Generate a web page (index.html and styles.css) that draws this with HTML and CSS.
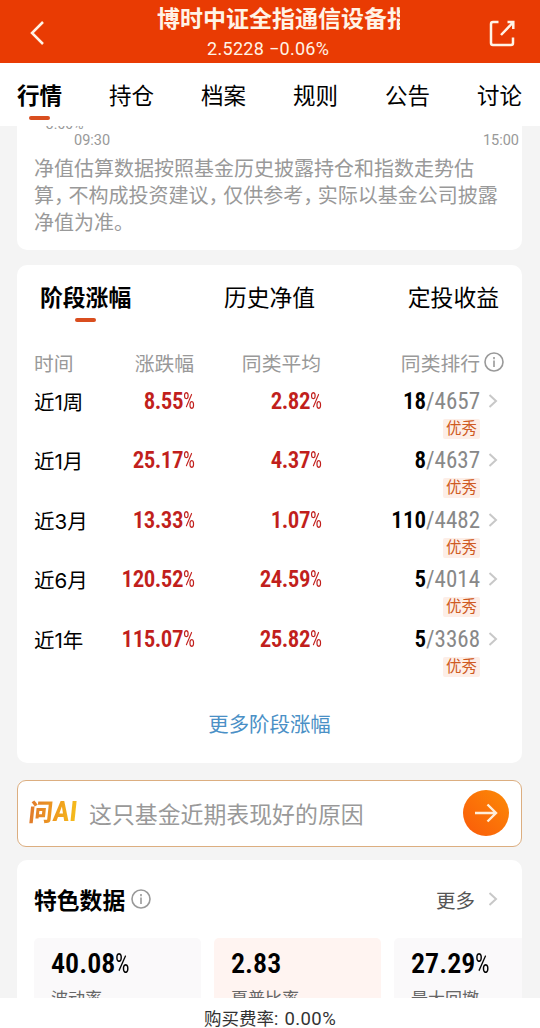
FILE: index.html
```html
<!DOCTYPE html>
<html lang="zh-CN">
<head>
    <meta charset="UTF-8">
    <meta name="viewport" content="width=device-width, initial-scale=1.0">
    <title>基金详情</title>
    <link rel="stylesheet" href="styles.css">
</head>
<body>
    <!-- 顶部标题栏 -->
    <header class="top-bar">
        <svg class="back" width="16" height="26" viewBox="0 0 16 26"><path d="M14 2 L3 13 L14 24"/></svg>
        <div class="fund">
            <h1>博时中证全指通信设备指数</h1>
            <p>2.5228 −0.06%</p>
        </div>
        <svg class="share" width="26" height="27" viewBox="0 0 26 27"><path d="M9.5 2 H4 Q2 2 2 4 V23 Q2 25 4 25 H22 Q24 25 24 23 V17.5 M12 15 L24 2.5 M18.5 2 H24.3 V9"/></svg>
    </header>

    <!-- 导航 -->
    <nav class="tabs">
        <a class="active">行情</a>
        <a>持仓</a>
        <a>档案</a>
        <a>规则</a>
        <a>公告</a>
        <a>讨论</a>
    </nav>

    <main>
        <!-- 净值估算 -->
        <section class="card estimate">
            <div class="axis-y">-3.00%</div>
            <div class="axis-x"><span>09:30</span><span>15:00</span></div>
            <p class="note">净值估算数据按照基金历史披露持仓和指数走势估<br>算<s>，</s>不构成投资建议<s>，</s>仅供参考<s>，</s>实际以基金公司披露<br>净值为准。</p>
        </section>

        <!-- 阶段涨幅 -->
        <section class="card stage">
            <div class="sub-tabs">
                <a class="active">阶段涨幅</a>
                <a>历史净值</a>
                <a>定投收益</a>
            </div>
            <div class="row head">
                <span>时间</span>
                <span>涨跌幅</span>
                <span>同类平均</span>
                <span>同类排行</span>
                <svg class="info" width="20" height="20" viewBox="0 0 20 20"><circle cx="10" cy="10" r="9"/><path d="M10 8.5 V15 M10 5 V7.2"/></svg>
            </div>
            <div class="row">
                <span class="period">近1周</span>
                <span class="rate">8.55<i>%</i></span>
                <span class="rate">2.82<i>%</i></span>
                <span class="rank"><b>18</b>/4657</span>
                <svg class="chevron" width="10" height="14" viewBox="0 0 10 14"><path d="M1.5 1 L8 7 L1.5 13"/></svg>
                <em class="badge">优秀</em>
            </div>
            <div class="row">
                <span class="period">近1月</span>
                <span class="rate">25.17<i>%</i></span>
                <span class="rate">4.37<i>%</i></span>
                <span class="rank"><b>8</b>/4637</span>
                <svg class="chevron" width="10" height="14" viewBox="0 0 10 14"><path d="M1.5 1 L8 7 L1.5 13"/></svg>
                <em class="badge">优秀</em>
            </div>
            <div class="row">
                <span class="period">近3月</span>
                <span class="rate">13.33<i>%</i></span>
                <span class="rate">1.07<i>%</i></span>
                <span class="rank"><b>110</b>/4482</span>
                <svg class="chevron" width="10" height="14" viewBox="0 0 10 14"><path d="M1.5 1 L8 7 L1.5 13"/></svg>
                <em class="badge">优秀</em>
            </div>
            <div class="row">
                <span class="period">近6月</span>
                <span class="rate">120.52<i>%</i></span>
                <span class="rate">24.59<i>%</i></span>
                <span class="rank"><b>5</b>/4014</span>
                <svg class="chevron" width="10" height="14" viewBox="0 0 10 14"><path d="M1.5 1 L8 7 L1.5 13"/></svg>
                <em class="badge">优秀</em>
            </div>
            <div class="row">
                <span class="period">近1年</span>
                <span class="rate">115.07<i>%</i></span>
                <span class="rate">25.82<i>%</i></span>
                <span class="rank"><b>5</b>/3368</span>
                <svg class="chevron" width="10" height="14" viewBox="0 0 10 14"><path d="M1.5 1 L8 7 L1.5 13"/></svg>
                <em class="badge">优秀</em>
            </div>
            <a class="more-link">更多阶段涨幅</a>
        </section>

        <!-- 问AI -->
        <section class="ask">
            <span class="ask-logo">问<b>AI</b></span>
            <span class="ask-text">这只基金近期表现好的原因</span>
            <button class="ask-go">
                <svg width="24" height="20" viewBox="0 0 24 20"><path d="M1 10 H22 M13.5 1.5 L22 10 L13.5 18.5"/></svg>
            </button>
        </section>

        <!-- 特色数据 -->
        <section class="card feature">
            <div class="feature-head">
                <h2>特色数据</h2>
                <svg class="info" width="20" height="20" viewBox="0 0 20 20"><circle cx="10" cy="10" r="9"/><path d="M10 8.5 V15 M10 5 V7.2"/></svg>
                <a>更多</a>
                <svg class="chevron" width="10" height="14" viewBox="0 0 10 14"><path d="M1.5 1 L8 7 L1.5 13"/></svg>
            </div>
            <div class="stats">
                <div class="stat"><strong>40.08<i>%</i></strong><p>波动率</p></div>
                <div class="stat hot"><strong>2.83</strong><p>夏普比率</p></div>
                <div class="stat"><strong>27.29<i>%</i></strong><p>最大回撤</p></div>
            </div>
        </section>
    </main>

    <footer>购买费率: <span>0.00%</span></footer>
</body>
</html>
```
FILE: styles.css
```css
* {
    margin: 0;
    padding: 0;
    box-sizing: border-box;
}

body {
    height: 1028px;
    display: flex;
    flex-direction: column;
    overflow: hidden;
    background: #f4f4f4;
    color: #000;
    font-family: Roboto, "Noto Sans CJK SC", sans-serif;
}

svg {
    display: block;
    fill: none;
    flex-shrink: 0;
}

i, em {
    font-style: normal;
}

/* ========= 顶部标题栏 ========= */
.top-bar {
    height: 63px;
    flex-shrink: 0;
    display: flex;
    padding: 0 25px 0 29px;
    background: #e93b03;
    color: #fff3e6;
}

.top-bar svg {
    stroke: #fff3e6;
    stroke-width: 2.5;
    margin-top: 20px;
}

.fund {
    width: 243px;
    margin: 0 auto 0 112px;
}

.fund h1 {
    height: 35px;
    line-height: 39px;
    overflow: hidden;
    white-space: nowrap;
    font-size: 23px;
    font-weight: 700;
}

.fund p {
    padding: 2px 0 0 50px;
    line-height: 24px;
    font-size: 18px;
    letter-spacing: 0.3px;
}

/* ========= 导航 ========= */
.tabs {
    height: 63px;
    flex-shrink: 0;
    display: flex;
    justify-content: space-between;
    padding: 0 18px 0 17px;
    background: #fff;
    font-size: 22.5px;
    line-height: 66px;
}

.active {
    position: relative;
    font-weight: 700;
}

.active::after {
    content: "";
    position: absolute;
    left: 50%;
    bottom: 6px;
    width: 21px;
    height: 4px;
    margin-left: -11px;
    border-radius: 3px;
    background: #d94e1f;
}

.tabs .active::after {
    bottom: 6px;
}

/* ========= 内容区 ========= */
main {
    flex: 1;
    min-height: 0;
    overflow: hidden;
    padding: 0 18px 0 17px;
}

.card {
    background: #fff;
    border-radius: 10px;
}

.estimate {
    height: 124px;
    overflow: hidden;
    border-radius: 0 0 10px 10px;
    color: #999;
}

.axis-y {
    height: 16px;
    margin: -10px 0 0 25px;
    line-height: 16px;
    font-size: 14px;
}

.axis-x {
    display: flex;
    justify-content: space-between;
    padding: 0 3px 0 57px;
    line-height: 17px;
    font-size: 14.5px;
}

.note {
    margin: 7px 0 0 17px;
    white-space: nowrap;
    font-size: 20px;
    line-height: 27px;
    font-feature-settings: "halt";
}

.note s {
    text-decoration: none;
    margin-right: 4.6px;
}

/* ========= 阶段涨幅 ========= */
.stage {
    height: 498px;
    margin-top: 15px;
}

.sub-tabs {
    display: flex;
    justify-content: space-between;
    height: 81px;
    padding: 0 23px 0 23px;
    font-size: 22.8px;
    line-height: 67px;
}

.sub-tabs .active::after {
    bottom: 24px;
}

.row {
    display: grid;
    grid-template-columns: 55px 105px 127px 159px 24px;
    grid-template-rows: 30px 20px;
    row-gap: 3px;
    align-items: center;
    height: 59.4px;
    margin-left: 17px;
    text-align: right;
}

.row.head {
    height: 40px;
    grid-template-rows: 32px;
    color: #999;
    font-size: 19.8px;
}

.row > :first-child {
    text-align: left;
    white-space: nowrap;
}

.period {
    font-family: Inter, "Noto Sans CJK SC", sans-serif;
    font-size: 20.5px;
}

.rate, .rank, .stat strong {
    font-stretch: 85%;
    font-size: 23px;
}

.rate {
    padding-top: 1px;
    color: #c11f1c;
    font-weight: 600;
    letter-spacing: -0.5px;
}

/* 百分号比数字更窄更细 */
.rate i, .stat i {
    display: inline-block;
    width: 11px;
    font-stretch: 75%;
    font-weight: 400;
    text-align: left;
    transform: scaleX(0.82);
    transform-origin: left;
}

.rank {
    padding-top: 1px;
    color: #888;
}

.rank b {
    color: #000;
    font-weight: 600;
}

.info {
    margin-left: 4px;
    stroke: #999;
    stroke-width: 1.6;
}

.chevron {
    margin-left: 8px;
    stroke: #c8c8c8;
    stroke-width: 2;
}

.badge {
    grid-column: 4;
    justify-self: end;
    width: 37px;
    height: 20px;
    line-height: 20px;
    border-radius: 2px;
    background: #fdeee7;
    color: #cf5a22;
    text-align: center;
    font-size: 15.5px;
}

.more-link {
    display: block;
    margin-top: 27px;
    text-align: center;
    font-size: 20.4px;
    line-height: 30px;
    color: #4a90c6;
}

/* ========= 问AI ========= */
.ask {
    display: flex;
    align-items: center;
    height: 67px;
    margin-top: 17px;
    padding: 0 12px 2px 11px;
    border: 1px solid #dcae80;
    border-radius: 9px;
    background: #fff;
}

.ask-logo {
    width: 60px;
    font-size: 24px;
    font-weight: 900;
    line-height: 30px;
    white-space: nowrap;
    color: transparent;
    background: linear-gradient(90deg, #e07a2c, #f0a01e 50%, #f5bd1c 80%);
    background-clip: text;
    -webkit-background-clip: text;
    transform: skewX(-6deg);
}

.ask-logo b {
    font-size: 28px;
    font-weight: 700;
    font-stretch: 85%;
}

.ask-text {
    flex: 1;
    font-size: 22.9px;
    color: #999;
}

.ask-go {
    display: flex;
    align-items: center;
    justify-content: center;
    width: 46px;
    height: 46px;
    border: none;
    border-radius: 50%;
    background: linear-gradient(45deg, #fa5a0a, #fc8a06);
}

.ask-go svg {
    stroke: #ffeeda;
    stroke-width: 2.4;
}

/* ========= 特色数据 ========= */
.feature {
    height: 200px;
    margin-top: 13px;
    padding-left: 17px;
    overflow: hidden;
}

.feature-head {
    display: flex;
    align-items: center;
    height: 78px;
    padding-right: 24px;
}

.feature-head h2 {
    font-size: 22.8px;
    font-weight: 700;
}

.feature-head .info {
    margin-left: 6px;
}

.feature-head a {
    margin-left: auto;
    margin-right: 5px;
    font-size: 19.5px;
    color: #555;
}

.stats {
    display: flex;
    gap: 13px;
}

.stat {
    width: 167px;
    height: 100px;
    flex-shrink: 0;
    padding: 8px 17px;
    border-radius: 5px;
    background: #faf9fa;
}

.stat.hot {
    background: #fff4f1;
}

.stat strong {
    display: block;
    font-size: 28px;
    font-weight: 600;
    line-height: 36px;
}

.stat p {
    margin-top: 5px;
    font-size: 17px;
    line-height: 24px;
    color: #666;
}

/* ========= 底部费率 ========= */
footer {
    height: 30px;
    flex-shrink: 0;
    background: #fff;
    text-align: center;
    font-size: 17.5px;
    line-height: 42px;
    color: #333;
}

footer span {
    margin-left: 2px;
    font-size: 18.5px;
    letter-spacing: 0.4px;
}
```
